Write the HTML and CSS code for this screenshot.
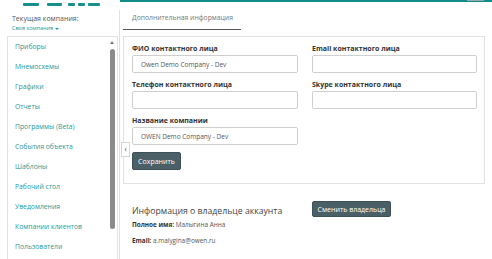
FILE: index.html
```html
<!doctype html>
<html>
<head>
<meta charset="UTF-8">
<title>Дополнительная информация</title>
<link rel="stylesheet" href="styles.css">
</head>
<body>
<div class="top">
  <div class="logo">
    <svg width="119" height="3" viewBox="0 0 119 3">
      <rect x="23" y="0" width="16" height="3" rx="1" fill="#15908f"/>
      <rect x="47" y="0" width="15" height="3" rx="1" fill="#15908f"/>
      <rect x="68" y="0" width="7" height="3" rx="1" fill="#15908f"/>
      <rect x="78" y="0" width="7" height="3" rx="1" fill="#15908f"/>
      <rect x="88" y="0" width="12" height="3" rx="1" fill="#15908f"/>
    </svg>
  </div>
  <div class="topbar"><span class="topbar-user"></span></div>
</div>

<div class="layout">
  <aside class="sidebar">
    <div class="company">
      <div class="company-label">Текущая компания:</div>
      <a href="#" class="company-link">Своя компания <span class="caret"></span></a>
    </div>
    <div class="menu-box">
      <ul class="menu">
        <li><a href="#">Приборы</a></li>
        <li><a href="#">Мнемосхемы</a></li>
        <li><a href="#">Графики</a></li>
        <li><a href="#">Отчеты</a></li>
        <li><a href="#">Программы (Beta)</a></li>
        <li><a href="#">События объекта</a></li>
        <li><a href="#">Шаблоны</a></li>
        <li><a href="#">Рабочий стол</a></li>
        <li><a href="#">Уведомления</a></li>
        <li><a href="#">Компании клиентов</a></li>
        <li><a href="#">Пользователи</a></li>
      </ul>
      <div class="scrollbar">
        <span class="scroll-up"></span>
        <span class="scroll-thumb"></span>
      </div>
    </div>
  </aside>

  <div class="divider"></div>

  <div class="content">
    <a href="#" class="collapse">&lsaquo;</a>

    <div class="tabs">
      <span class="tab">Дополнительная информация</span>
    </div>

    <form class="card">
      <div class="col">
        <div class="field">
          <label>ФИО контактного лица</label>
          <input type="text" value="Owen Demo Company - Dev">
        </div>
        <div class="field">
          <label>Телефон контактного лица</label>
          <input type="text" value="">
        </div>
        <div class="field">
          <label>Название компании</label>
          <input type="text" value="OWEN Demo Company - Dev">
        </div>
        <button type="button" class="btn btn-save">Сохранить</button>
      </div>
      <div class="col">
        <div class="field">
          <label>Email контактного лица</label>
          <input type="text" value="">
        </div>
        <div class="field">
          <label>Skype контактного лица</label>
          <input type="text" value="">
        </div>
      </div>
    </form>

    <div class="owner">
      <div class="owner-info">
        <h2>Информация о владельце аккаунта</h2>
        <p class="owner-name"><b>Полное имя:</b> Малыгина Анна</p>
        <p class="owner-mail"><b>Email:</b> a.malygina@owen.ru</p>
      </div>
      <div>
        <button type="button" class="btn btn-owner">Сменить владельца</button>
      </div>
    </div>
  </div>
</div>
</body>
</html>
```

FILE: styles.css
```css
html, body {
	height: 259px;
	margin: 0;
	overflow: hidden;
}

body {
	background: #fff;
	font-family: "Open Sans", "DejaVu Sans", sans-serif;
	color: #333;
}

a {
	text-decoration: none;
}

/* top strip (bottom edge of the header) */
.top {
	display: flex;
	height: 3px;
}

.logo {
	width: 120px;
	height: 3px;
	line-height: 0;
}

.topbar {
	flex: 1;
	height: 2px;
	background: #128c8b;
	position: relative;
}

.topbar-user {
	position: absolute;
	left: 347px;
	top: 0;
	width: 17px;
	height: 1px;
	background: #9aa8a8;
}

.layout {
	display: flex;
	height: 256px;
	overflow: hidden;
}

/* sidebar */
.sidebar {
	width: 119px;
	flex: none;
}

.company {
	padding: 11px 0 0 12px;
	height: 22px;
}

.company-label {
	font-size: 7px;
	line-height: 10px;
	color: #555;
}

.company-link {
	display: block;
	font-size: 5.5px;
	line-height: 8px;
	color: #1a9898;
}

.caret {
	display: inline-block;
	width: 0;
	height: 0;
	border-left: 2px solid transparent;
	border-right: 2px solid transparent;
	border-top: 2px solid #1a9898;
	vertical-align: middle;
}

.menu-box {
	display: flex;
	margin-left: 7px;
	width: 109px;
	height: 222px;
	overflow: hidden;
	border: 1px solid #e3e3e3;
	border-bottom: none;
}

.menu {
	flex: 1;
	list-style: none;
	margin: 0;
	padding: 0;
}

.menu li {
	height: 20px;
	line-height: 20px;
	padding-left: 7px;
	font-size: 6.8px;
}

.menu a {
	color: #1f9a9a;
}

.scrollbar {
	width: 8px;
	display: flex;
	flex-direction: column;
	align-items: center;
	padding-top: 4px;
	margin-right: 1px;
}

.scroll-up {
	width: 0;
	height: 0;
	border-left: 2px solid transparent;
	border-right: 2px solid transparent;
	border-bottom: 3px solid #777;
}

.scroll-thumb {
	margin-top: 5px;
	width: 5px;
	height: 180px;
	border-radius: 3px;
	background: #8a8a8a;
}

.divider {
	width: 1px;
	flex: none;
	margin-top: 7px;
	background: #e0e0e0;
}

/* main content */
.content {
	position: relative;
	width: 362px;
	padding-left: 3px;
}

.collapse {
	position: absolute;
	left: 1px;
	top: 139px;
	width: 7px;
	height: 13px;
	border: 1px solid #d5d5d5;
	background: #fff;
	color: #666;
	font-size: 9px;
	line-height: 12px;
	text-align: center;
}

.tabs {
	height: 24px;
}

.tab {
	display: inline-block;
	width: 109px;
	padding: 7px 0 6px 9px;
	font-size: 6.8px;
	line-height: 10px;
	color: #777;
	white-space: nowrap;
	border-bottom: 1px solid #555;
}

.card {
	display: flex;
	gap: 14px;
	margin: 9px 0 0;
	padding: 7px 7px 13px 8px;
	border: 1px solid #e2e2e2;
}

.col {
	width: 166px;
	display: flex;
	flex-direction: column;
	align-items: flex-start;
}

.col + .col {
	width: 165px;
}

.field {
	width: 100%;
	margin-bottom: 7px;
}

.field label {
	display: block;
	font-size: 7px;
	font-weight: bold;
	line-height: 10px;
	margin-bottom: 1px;
	color: #333;
}

.field input {
	display: block;
	box-sizing: border-box;
	width: 100%;
	height: 18px;
	margin: 0;
	padding: 0 0 0 8px;
	border: 1px solid #cfcfcf;
	border-radius: 2px;
	font-family: inherit;
	font-size: 6.5px;
	color: #555;
	outline: none;
}

.btn {
	box-sizing: border-box;
	margin: 0;
	padding: 0;
	border: 1px solid #3f5158;
	border-radius: 2px;
	background: #4b5f66;
	color: #fff;
	font-family: inherit;
	font-size: 7px;
	cursor: pointer;
}

.btn-save {
	width: 49px;
	height: 18px;
}

/* owner block */
.owner {
	display: flex;
	gap: 14px;
	padding-left: 9px;
}

.owner-info {
	width: 166px;
}

.owner h2 {
	margin: 21px 0 0;
	font-size: 8.7px;
	font-weight: normal;
	line-height: 12px;
	color: #444;
	white-space: nowrap;
}

.owner p {
	margin: 3px 0 0;
	font-size: 6.4px;
	line-height: 10px;
	color: #555;
}

.owner p b {
	color: #333;
}

.owner .owner-mail {
	margin-top: 6px;
}

.btn-owner {
	margin-top: 17px;
	width: 79px;
	height: 16px;
}
```
